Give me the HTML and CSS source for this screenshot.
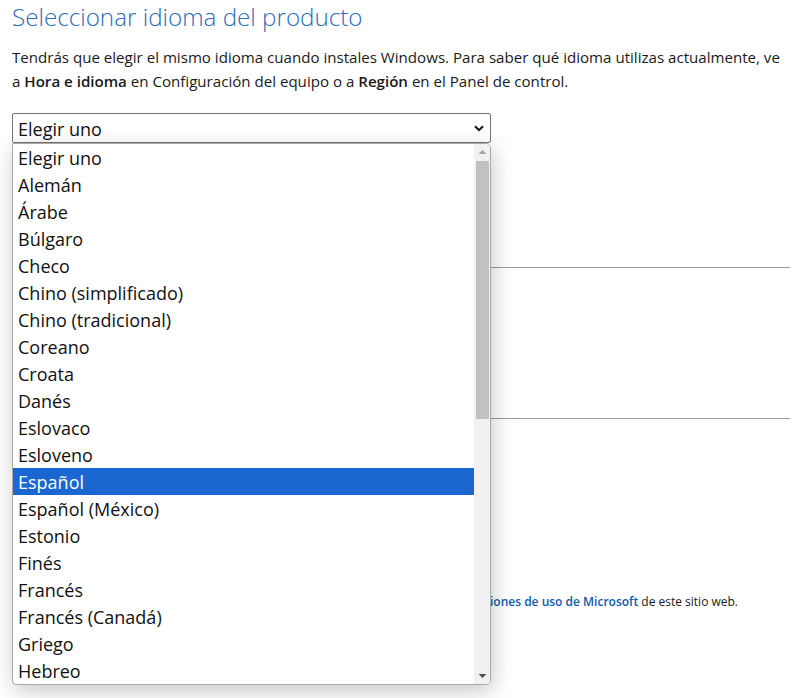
FILE: index.html
```html
<!DOCTYPE html>
<html lang="es">
<head>
<meta charset="utf-8">
<title>Seleccionar idioma del producto</title>
<link rel="stylesheet" href="styles.css">
</head>
<body>
<main class="page">
  <h1 class="title">Seleccionar idioma del producto</h1>
  <p class="intro"><span>Tendrás que elegir el mismo idioma cuando instales Windows. Para saber qué idioma utilizas actualmente, ve</span> <span>a</span> <b>Hora e idioma</b> <span>en Configuración del equipo o a</span> <b>Región</b> <span>en el Panel de control.</span></p>
  <div class="picker">
    <div class="select">
      <span>Elegir uno</span>
      <svg class="chev" width="10" height="7" viewBox="0 0 10 7"><path d="M1 1.2 L5 5.2 L9 1.2" fill="none" stroke="#111" stroke-width="2"/></svg>
    </div>
    <div class="list">
      <div class="options">
        <div class="opt">Elegir uno</div>
        <div class="opt">Alemán</div>
        <div class="opt">Árabe</div>
        <div class="opt">Búlgaro</div>
        <div class="opt">Checo</div>
        <div class="opt">Chino (simplificado)</div>
        <div class="opt">Chino (tradicional)</div>
        <div class="opt">Coreano</div>
        <div class="opt">Croata</div>
        <div class="opt">Danés</div>
        <div class="opt">Eslovaco</div>
        <div class="opt">Esloveno</div>
        <div class="opt sel">Español</div>
        <div class="opt">Español (México)</div>
        <div class="opt">Estonio</div>
        <div class="opt">Finés</div>
        <div class="opt">Francés</div>
        <div class="opt">Francés (Canadá)</div>
        <div class="opt">Griego</div>
        <div class="opt">Hebreo</div>
      </div>
      <div class="scrollbar">
        <svg class="arrow" width="9" height="6" viewBox="0 0 9 6"><path d="M0.5 5 L4.5 1 L8.5 5 Z" fill="#a3a3a3"/></svg>
        <div class="thumb"></div>
        <div class="track"></div>
        <svg class="arrow" width="9" height="6" viewBox="0 0 9 6"><path d="M0.5 1 L4.5 5 L8.5 1 Z" fill="#505050"/></svg>
      </div>
    </div>
  </div>
  <div class="behind">
    <div class="sec sec1"></div>
    <div class="sec sec2"></div>
    <p class="terms">Al descargar el producto aceptas las <a href="#">Condiciones de uso de Microsoft</a> de este sitio web.</p>
  </div>
</main>
</body>
</html>
```
FILE: styles.css
```css
html, body {
  margin: 0;
  padding: 0;
  background: #fff;
}
body {
  font-family: "Open Sans", "Noto Sans", sans-serif;
  color: #1a1a1a;
  min-height: 698px;
}
.page {
  position: relative;
  min-height: 698px;
  padding: 0 4px 0 12px;
  overflow: hidden;
}
.title {
  margin: 0;
  padding-top: 1px;
  font-family: "Open Sans", sans-serif;
  font-weight: 300;
  font-size: 24.2px;
  line-height: 32px;
  color: #2c6db5;
}
.intro {
  margin: 12px 0 0;
  font-size: 15.1px;
  line-height: 24px;
  color: #1a1a1a;
}
.intro b {
  font-weight: 600;
}
.picker {
  position: absolute;
  left: 12px;
  top: 113px;
  width: 479px;
  z-index: 2;
}
.select {
  box-sizing: border-box;
  height: 30px;
  border: 1px solid #767676;
  border-radius: 2px;
  display: flex;
  align-items: center;
  justify-content: space-between;
  padding: 1px 6px 0 5px;
  font-size: 18px;
  color: #111;
  background: #fff;
}
.list {
  box-sizing: border-box;
  display: flex;
  border: 1px solid #a9a9a9;
  border-radius: 0 5px 5px 4px;
  background: #fff;
  box-shadow: 2px 6px 22px rgba(0,0,0,0.22);
  overflow: hidden;
}
.options {
  flex: 1;
}
.opt {
  box-sizing: border-box;
  height: 27px;
  padding: 2px 0 0 5px;
  line-height: 25px;
  font-size: 18px;
  color: #111;
  white-space: nowrap;
}
.opt.sel {
  background: #1a67d1;
  color: #fff;
}
.scrollbar {
  width: 16px;
  background: #f1f1f1;
  display: flex;
  flex-direction: column;
  align-items: center;
}
.arrow {
  display: block;
  margin: 5px 0;
}
.thumb {
  width: 13px;
  height: 258px;
  margin-top: 1px;
  background: #c1c1c1;
}
.track {
  flex: 1;
}
.behind {
  padding-top: 174px;
}
.sec {
  border-bottom: 1px solid #9b9b9b;
}
.sec1 {
  height: 0;
}
.sec2 {
  height: 150px;
}
.terms {
  margin: 175px 0 0;
  width: 726px;
  text-align: right;
  font-size: 12px;
  line-height: 16px;
  color: #1a1a1a;
}
.terms a {
  color: #0b5cad;
  text-decoration: none;
  font-weight: 600;
}
```
